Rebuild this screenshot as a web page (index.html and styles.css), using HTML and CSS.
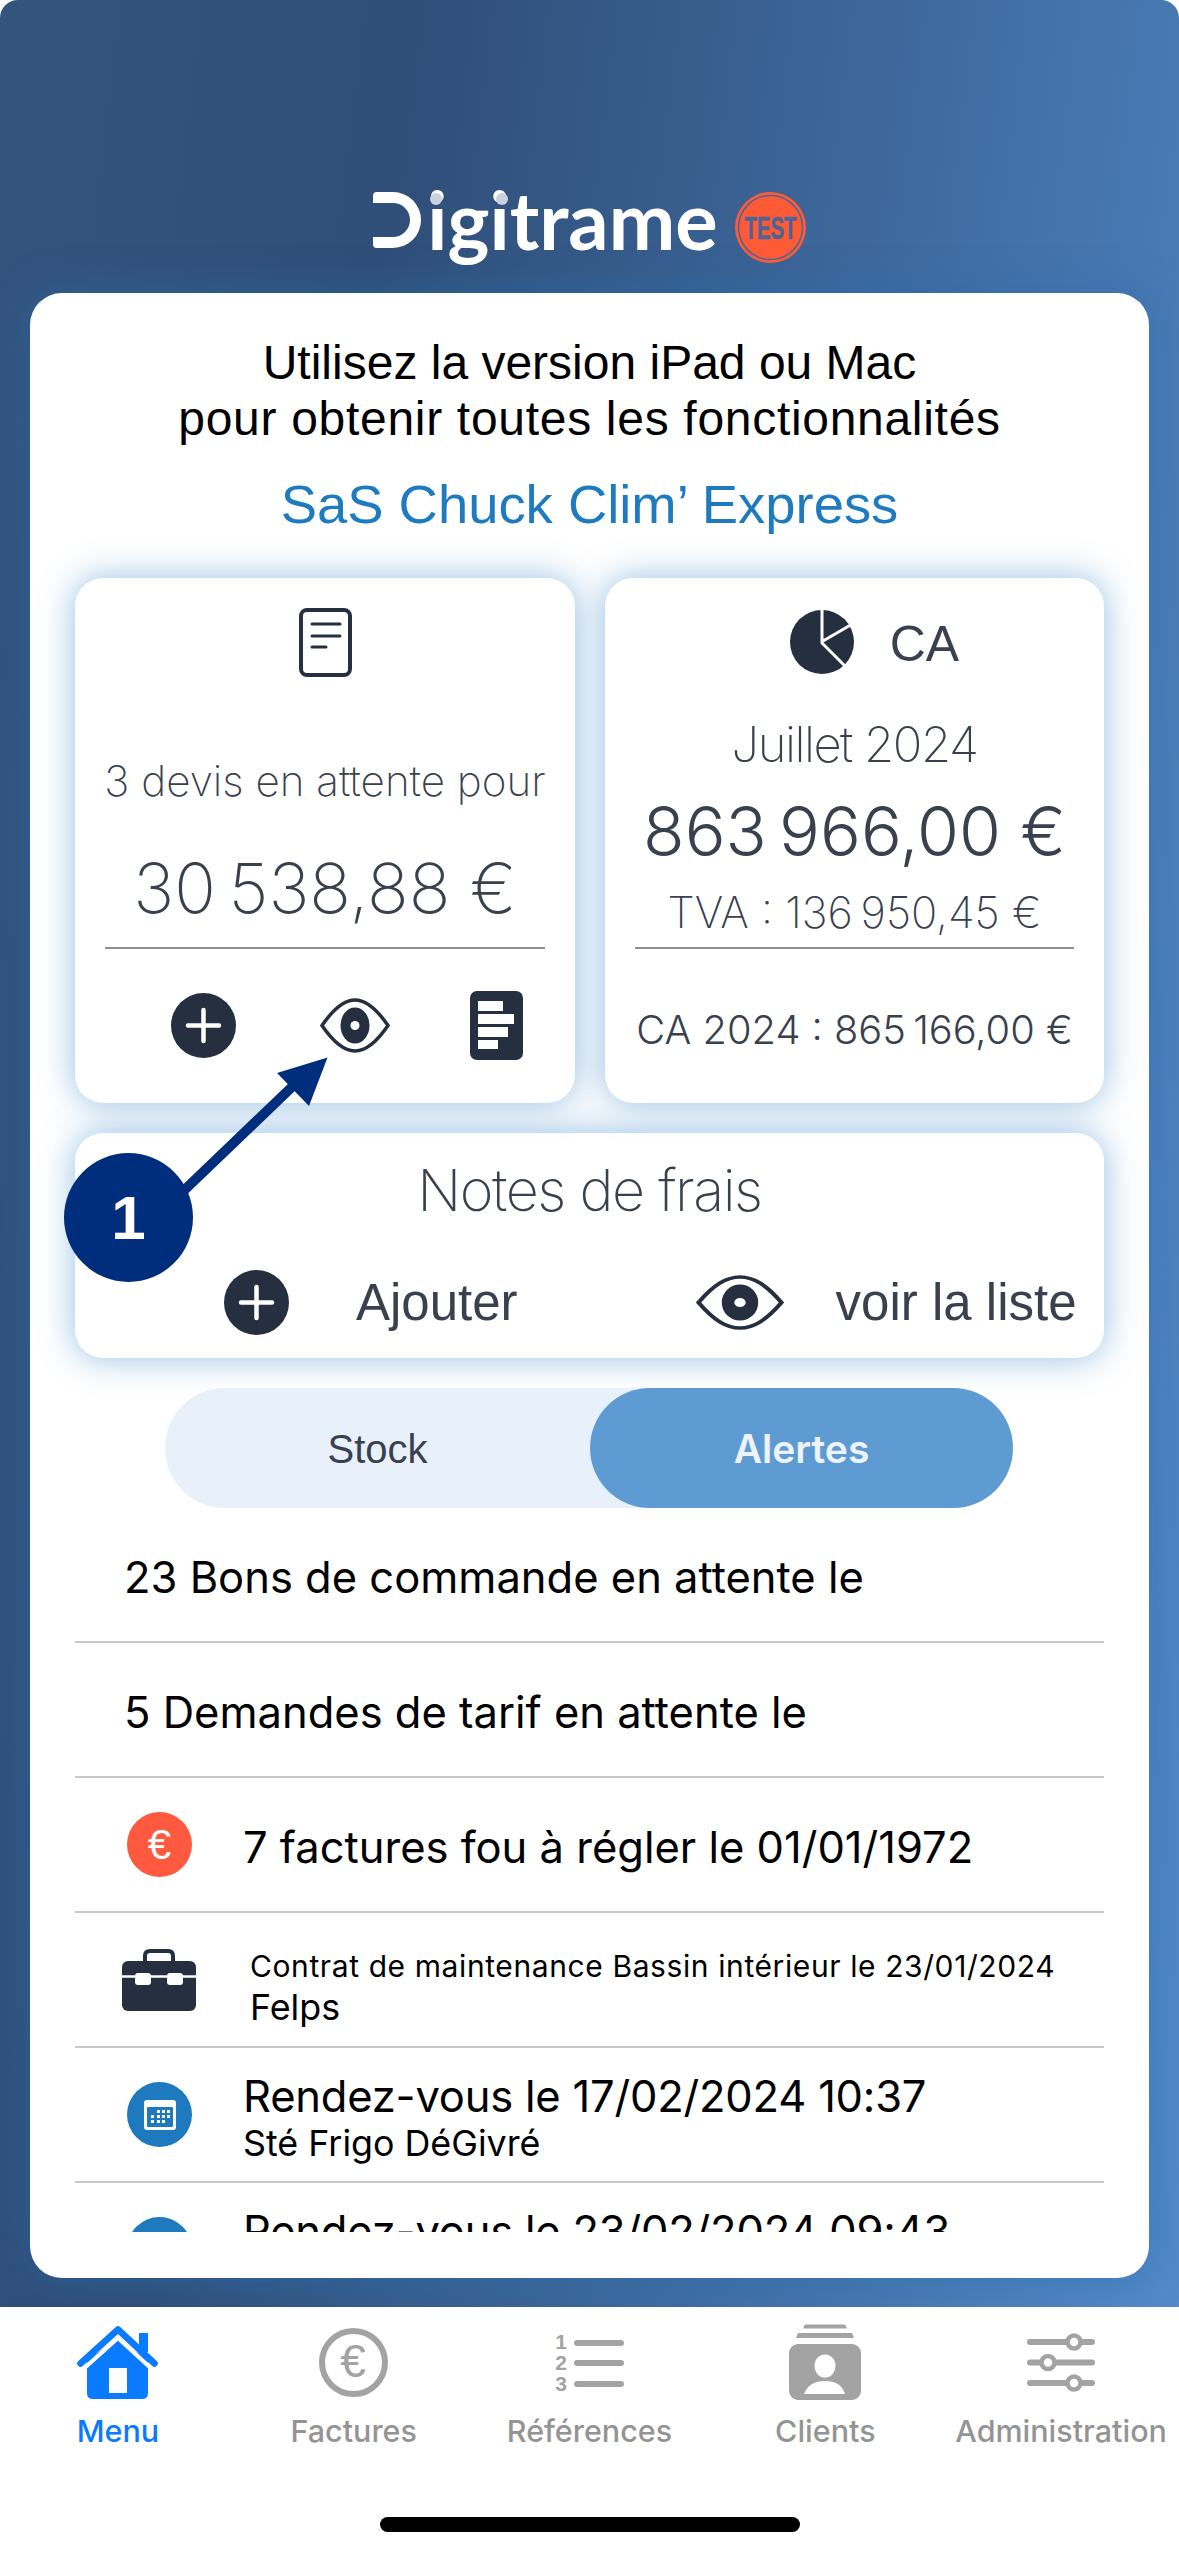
FILE: index.html
```html
<!DOCTYPE html>
<html lang="fr">
<head>
    <meta charset="UTF-8">
    <title>Digitrame</title>
    <link rel="stylesheet" href="styles.css">
</head>
<body>

<div class="screen">
    <div class="top">
        <header class="logo-bar">
            <span class="logo-d"></span>
            <span class="logo-word">igitrame<i class="logo-dot dot-one"></i><i class="logo-dot dot-two"></i></span>
            <svg class="test-badge" viewBox="0 0 71 71">
                <circle cx="35.5" cy="35.5" r="35.5" fill="#ff5a36"/>
                <circle cx="35.5" cy="35.5" r="32" fill="none" stroke="#4b6596" stroke-width="1.5"/>
                <text x="35.5" y="47" text-anchor="middle" textLength="52" lengthAdjust="spacingAndGlyphs" class="test-text">TEST</text>
            </svg>
        </header>

        <main class="panel">
            <p class="intro">Utilisez la version iPad ou Mac<br><span class="intro-long">pour obtenir toutes les fonctionnalités</span></p>
            <h1 class="company">SaS Chuck Clim’ Express</h1>

            <div class="cards">
                <section class="card">
                    <svg class="doc-icon" viewBox="0 0 53 69" fill="none" stroke="#252f3f">
                        <rect x="2" y="2" width="49" height="65" rx="6" stroke-width="4"/>
                        <path d="M13 16H41M13 28H41M13 39H27" stroke-width="3" stroke-linecap="round"/>
                    </svg>
                    <p class="devis-label">3 devis en attente pour</p>
                    <p class="devis-amount">30&#8239;538,88 €</p>
                    <div class="card-line"></div>
                    <div class="card-actions">
                        <svg class="plus-icon" viewBox="0 0 65 65"><circle cx="32.5" cy="32.5" r="32.5" fill="#252f3f"/><path d="M17 32.5H48M32.5 17V48" stroke="#fff" stroke-width="4.5" stroke-linecap="round"/></svg>
                        <svg class="eye-icon" viewBox="0 0 70 55"><path d="M2 27.5C14 10 24 2 35 2S56 10 68 27.5C56 45 46 53 35 53S14 45 2 27.5Z" fill="none" stroke="#252f3f" stroke-width="3.5"/><ellipse cx="35" cy="27.5" rx="14.5" ry="18" fill="#252f3f"/><circle cx="35" cy="27.5" r="4.5" fill="#fff"/></svg>
                        <svg class="report-icon" viewBox="0 0 53 69"><rect width="53" height="69" rx="7" fill="#252f3f"/><path d="M8 10H33V20H8ZM8 23H44V33H8ZM8 36H38V46H8ZM8 49H28V58H8Z" fill="#fff"/></svg>
                    </div>
                </section>

                <section class="card">
                    <div class="ca-head">
                        <svg class="pie-icon" viewBox="0 0 64 64"><circle cx="32" cy="32" r="32" fill="#252f3f"/><path d="M32 -1V33L57 58M33 31L64 13" fill="none" stroke="#fff" stroke-width="3"/></svg>
                        <span class="ca-label">CA</span>
                    </div>
                    <p class="ca-month">Juillet 2024</p>
                    <p class="ca-amount">863&#8239;966,00 €</p>
                    <p class="ca-tva">TVA : 136&#8239;950,45 €</p>
                    <div class="card-line"></div>
                    <p class="ca-year">CA 2024 : 865&#8239;166,00 €</p>
                </section>
            </div>

            <section class="notes">
                <h2 class="notes-title">Notes de frais</h2>
                <div class="notes-actions">
                    <svg class="plus-icon" viewBox="0 0 65 65"><circle cx="32.5" cy="32.5" r="32.5" fill="#252f3f"/><path d="M17 32.5H48M32.5 17V48" stroke="#fff" stroke-width="4.5" stroke-linecap="round"/></svg>
                    <span class="notes-add">Ajouter</span>
                    <svg class="eye-wide" viewBox="0 0 70 55" preserveAspectRatio="none"><path d="M2 27.5C14 10 24 2 35 2S56 10 68 27.5C56 45 46 53 35 53S14 45 2 27.5Z" fill="none" stroke="#252f3f" stroke-width="3.5"/><ellipse cx="35" cy="27.5" rx="14.5" ry="18" fill="#252f3f"/><circle cx="35" cy="27.5" r="4.5" fill="#fff"/></svg>
                    <span class="notes-list">voir la liste</span>
                </div>
            </section>

            <div class="toggle">
                <span class="toggle-off">Stock</span>
                <span class="toggle-on">Alertes</span>
            </div>

            <div class="list">
                <div class="row row-plain">23 Bons de commande en attente le</div>
                <div class="row row-plain">5 Demandes de tarif en attente le</div>
                <div class="row row-round">
                    <span class="round-icon euro">€</span>
                    <span class="row-text">7 factures fou à régler le 01/01/1972</span>
                </div>
                <div class="row">
                    <svg class="case-icon" viewBox="0 0 74 62">
                        <path d="M23 13V7Q23 2 28 2H46Q51 2 51 7V13" fill="none" stroke="#252f3f" stroke-width="4"/>
                        <rect y="12" width="74" height="50" rx="6" fill="#252f3f"/>
                        <path d="M0 27.5H74" stroke="#fff" stroke-width="2.5"/>
                        <rect x="13" y="24" width="16" height="12" rx="3" fill="#fff"/>
                        <rect x="45" y="24" width="16" height="12" rx="3" fill="#fff"/>
                    </svg>
                    <div class="row-stack row-stack-small">
                        <span class="contract">Contrat de maintenance Bassin intérieur le 23/01/2024</span>
                        <span class="row-sub">Felps</span>
                    </div>
                </div>
                <div class="row row-round">
                    <span class="round-icon calendar">
                        <svg viewBox="0 0 34 32" class="cal-svg">
                            <rect x="1" y="1" width="32" height="30" rx="3" fill="#fff"/>
                            <rect x="4" y="8" width="26" height="20" rx="1" fill="#1e79bf"/>
                            <g fill="#fff">
                                <rect x="14" y="11" width="3" height="3"/><rect x="19" y="11" width="3" height="3"/><rect x="24" y="11" width="3" height="3"/>
                                <rect x="8" y="16" width="3" height="3"/><rect x="14" y="16" width="3" height="3"/><rect x="19" y="16" width="3" height="3"/><rect x="24" y="16" width="3" height="3"/>
                                <rect x="8" y="21" width="3" height="3"/><rect x="14" y="21" width="3" height="3"/><rect x="19" y="21" width="3" height="3"/>
                            </g>
                        </svg>
                    </span>
                    <div class="row-stack row-stack-date">
                        <span class="row-main">Rendez-vous le 17/02/2024 10:37</span>
                        <span class="row-sub">Sté Frigo DéGivré</span>
                    </div>
                </div>
                <div class="row row-round">
                    <span class="round-icon calendar"></span>
                    <div class="row-stack row-stack-date">
                        <span class="row-main">Rendez-vous le 23/02/2024 09:43</span>
                        <span class="row-sub">&nbsp;</span>
                    </div>
                </div>
            </div>
        </main>
    </div>

    <nav class="tabs">
        <div class="tab-grid">
            <div class="tab tab-active">
                <span class="tab-icon">
                    <svg class="home-icon" viewBox="0 0 81 73">
                        <path d="M62 7H71V26H62Z" fill="#0a7aff"/>
                        <path d="M10 34L41 13L71 34V67Q71 73 65 73H16Q10 73 10 67Z" fill="#0a7aff"/>
                        <path d="M3 46L41 12L78 46" fill="none" stroke="#fff" stroke-width="4"/>
                        <path d="M3.500 37.500L41 3.500L77.500 37.500" fill="none" stroke="#0a7aff" stroke-width="6.500" stroke-linecap="round" stroke-linejoin="round"/>
                        <rect x="32" y="42" width="18" height="25" fill="#fff"/>
                    </svg>
                </span>
                <span>Menu</span>
            </div>
            <div class="tab">
                <span class="tab-icon">
                    <svg class="coin-icon" viewBox="0 0 69 69">
                        <circle cx="34.500" cy="34.500" r="31.500" fill="none" stroke="#a3a3a3" stroke-width="6"/>
                        <text x="34" y="49" text-anchor="middle" class="coin-text">€</text>
                    </svg>
                </span>
                <span>Factures</span>
            </div>
            <div class="tab">
                <span class="tab-icon">
                    <svg class="refs-icon" viewBox="0 0 69 59">
                        <g class="refs-num"><text x="6" y="16" text-anchor="middle">1</text><text x="6" y="37" text-anchor="middle">2</text><text x="6" y="58" text-anchor="middle">3</text></g>
                        <path d="M22 10H66M22 30H66M22 51H66" stroke="#a3a3a3" stroke-width="6" stroke-linecap="round"/>
                    </svg>
                </span>
                <span>Références</span>
            </div>
            <div class="tab">
                <span class="tab-icon">
                    <svg class="clients-icon" viewBox="0 0 72 76">
                        <path d="M16 .5H56L58 4.500H14ZM9 9H63L65 14H7Z" fill="#a3a3a3"/>
                        <rect y="20" width="72" height="56" rx="9" fill="#a3a3a3"/>
                        <ellipse cx="36" cy="42" rx="10.500" ry="11.500" fill="#fff"/>
                        <path d="M15 70Q20 57 36 57T56 70Z" fill="#fff"/>
                    </svg>
                </span>
                <span>Clients</span>
            </div>
            <div class="tab">
                <span class="tab-icon">
                    <svg class="sliders-icon" viewBox="0 0 68 59">
                        <path d="M3 9H65M3 29.500H65M3 50H65" stroke="#a3a3a3" stroke-width="6" stroke-linecap="round"/>
                        <g fill="#fff" stroke="#a3a3a3" stroke-width="4.500"><circle cx="47" cy="9" r="6.500"/><circle cx="21" cy="29.500" r="6.500"/><circle cx="47" cy="50" r="6.500"/></g>
                    </svg>
                </span>
                <span>Administration</span>
            </div>
        </div>
        <div class="home-bar"></div>
    </nav>

    <div class="callout">
        <svg class="callout-arrow" viewBox="0 0 270 240">
            <path d="M110 150L230 35" stroke="#002e7c" stroke-width="10"/>
            <path d="M263.500 7.500L213 23L245 56Z" fill="#002e7c"/>
        </svg>
        <span class="callout-num">1</span>
    </div>
</div>

</body>
</html>
```

FILE: styles.css
```css
* { box-sizing: border-box; }
body {
    margin: 0;
    background: #fff;
    font-family: 'Liberation Sans', Arial, sans-serif;
}
p { margin: 0; }
h1, h2 { margin: 0; font-weight: normal; }
svg { display: block; flex: none; overflow: visible; }

.screen {
    position: relative;
    width: 1179px;
    height: 2556px;
    overflow: hidden;
    display: flex;
    flex-direction: column;
}
.top {
    height: 2307px;
    padding: 0 30px;
    border-radius: 18px 18px 0 0;
    background: linear-gradient(97deg, #34547e 0%, #2f4e78 28%, #3f6a9f 64%, #538ac9 100%);
}

/* logo */
.logo-bar {
    height: 293px;
    padding-top: 192px;
    display: flex;
    justify-content: center;
    align-items: flex-start;
}
.logo-d {
    width: 48px;
    height: 56px;
    margin-right: 6px;
    border: 11px solid #fff;
    border-left: none;
    border-radius: 4px 30px 30px 4px;
}
.logo-word {
    position: relative;
    margin-top: -17px;
    font-family: Lato, sans-serif;
    font-weight: 700;
    font-size: 79.500px;
    line-height: 90px;
    color: #fff;
}
.logo-dot {
    position: absolute;
    width: 12px;
    height: 12px;
    top: 18px;
    border-radius: 50%;
    background: #c9d2de;
}
.dot-one { left: 3px; }
.dot-two { left: 69px; }
.test-badge { width: 71px; height: 71px; margin-left: 17px; }
.test-text {
    font-family: 'Liberation Sans', sans-serif;
    font-weight: 700;
    font-size: 31px;
    fill: #4b6596;
    stroke: #4b6596;
    stroke-width: 0.6px;
}

/* white panel */
.panel {
    height: 1985px;
    padding: 42px 45px 0;
    border-radius: 32px;
    background: #fff;
    box-shadow: 0 0 40px rgba(40, 110, 175, 0.55);
}
.intro {
    font-size: 48px;
    line-height: 56px;
    text-align: center;
    color: #000;
    white-space: nowrap;
}
.intro-long { letter-spacing: 0.7px; }
.company {
    margin-top: 28px;
    margin-bottom: 43px;
    font-size: 54.400px;
    line-height: 60px;
    text-align: center;
    color: #1f7bc0;
}

/* cards */
.cards {
    display: grid;
    grid-template-columns: 500px 499px;
    gap: 30px;
}
.card, .notes {
    background: #fff;
    border-radius: 28px;
    box-shadow: 0 0 34px rgba(70, 145, 205, 0.58);
    color: #39414f;
    font-family: Inter, sans-serif;
    font-weight: 200;
    white-space: nowrap;
}
.card {
    height: 525px;
    padding: 30px 30px 0;
    display: flex;
    flex-direction: column;
    align-items: center;
}
.card-line {
    align-self: stretch;
    flex: none;
    height: 2px;
    background: #8e8e93;
}
.doc-icon { width: 53px; height: 69px; }
.devis-label {
    margin-top: 76px;
    font-size: 42.200px;
    line-height: 56px;
}
.devis-amount {
    margin-top: 37px;
    margin-bottom: 17px;
    font-size: 69px;
    line-height: 84px;
    letter-spacing: -2px;
}
.card-actions {
    align-self: stretch;
    margin-top: 42px;
    padding-left: 66px;
    display: flex;
    align-items: center;
}
.plus-icon { width: 65px; height: 65px; }
.eye-icon { width: 70px; height: 55px; margin-left: 84px; }
.report-icon { width: 53px; height: 69px; margin-left: 80px; }

.ca-head {
    display: flex;
    align-items: center;
    gap: 36px;
    height: 64px;
    margin-top: 2px;
    padding-left: 40px;
}
.ca-label {
    padding-top: 4px;
    font-family: 'Liberation Sans', sans-serif;
    font-size: 50px;
    font-weight: 400;
}
.pie-icon { width: 64px; height: 64px; }
.ca-month {
    margin-top: 41px;
    font-size: 49px;
    line-height: 60px;
    letter-spacing: -1.5px;
}
.ca-amount {
    margin-top: 14px;
    font-weight: 300;
    font-size: 68px;
    line-height: 84px;
    letter-spacing: -2.200px;
}
.ca-tva {
    margin-top: 12px;
    margin-bottom: 8px;
    font-size: 43.400px;
    line-height: 54px;
}
.ca-year {
    margin-top: 55px;
    font-weight: 300;
    font-size: 39.800px;
    line-height: 52px;
}

.notes {
    height: 225px;
    margin-top: 30px;
    padding-top: 24px;
}
.notes-title {
    font-weight: 200;
    font-size: 57.500px;
    line-height: 66px;
    letter-spacing: -1.500px;
    text-align: center;
}
.notes-actions {
    margin-top: 47px;
    padding-left: 149px;
    display: flex;
    align-items: center;
    font-family: 'Liberation Sans', sans-serif;
    font-weight: 400;
    font-size: 51px;
}
.notes-add { margin-left: 67px; }
.eye-wide { width: 88px; height: 55px; margin-left: 178px; }
.notes-list { margin-left: 52px; }

/* toggle */
.toggle {
    width: 848px;
    height: 120px;
    margin: 30px 0 0 90px;
    border-radius: 60px;
    background: #e8f0fa;
    display: grid;
    grid-template-columns: 425px 423px;
    grid-template-rows: 120px;
    font-size: 40px;
    line-height: 122px;
    text-align: center;
}
.toggle-off { color: #39414f; }
.toggle-on {
    border-radius: 60px;
    background: #5f9bd3;
    color: #eef3fb;
    font-family: Inter, sans-serif;
    font-weight: 600;
    font-size: 39px;
}

/* list */
.list {
    height: 724px;
    overflow: hidden;
    font-family: Inter, sans-serif;
    color: #000;
}
.row {
    height: 135px;
    padding-left: 47px;
    border-bottom: 2px solid #c8c8cc;
    display: flex;
    align-items: center;
    font-size: 43.500px;
}
.row-plain { padding: 4px 0 0 49px; }
.row-round { padding-left: 52px; }
.round-icon {
    flex: none;
    width: 65px;
    height: 65px;
    border-radius: 50%;
    display: flex;
    align-items: center;
    justify-content: center;
}
.euro {
    background: #ff5a40;
    color: #fff;
    font-family: 'Liberation Sans', sans-serif;
    font-size: 42px;
}
.calendar { background: #1e79bf; }
.cal-svg { width: 34px; height: 32px; }
.row-text { margin-left: 51px; padding-top: 4px; }
.case-icon { width: 74px; height: 62px; }
.row-stack {
    margin-left: 51px;
    display: flex;
    flex-direction: column;
}
.row-stack-small { margin-left: 54px; padding-top: 14px; }
.row-stack-date { padding-top: 4px; }
.contract { font-size: 30px; line-height: 40px; letter-spacing: 0.6px; }
.row-main { line-height: 52px; letter-spacing: -0.2px; }
.row-sub { font-size: 35.800px; line-height: 42px; }

/* tab bar */
.tabs {
    height: 249px;
    background: #fff;
    padding-top: 15px;
}
.tab-grid {
    display: grid;
    grid-template-columns: repeat(5, 1fr);
}
.tab {
    display: flex;
    flex-direction: column;
    align-items: center;
    font-family: Inter, sans-serif;
    font-weight: 500;
    font-size: 30.500px;
    line-height: 38px;
    color: #949494;
    white-space: nowrap;
}
.tab-active { color: #0a7aff; }
.tab-icon {
    height: 80px;
    margin-bottom: 10px;
    display: flex;
    align-items: center;
}
.home-icon { width: 81px; height: 73px; }
.coin-icon { width: 69px; height: 69px; }
.coin-text { font-family: 'Liberation Sans', sans-serif; font-size: 46px; fill: #a3a3a3; }
.refs-icon { width: 69px; height: 59px; }
.refs-num text { font-family: 'Liberation Sans', sans-serif; font-weight: 700; font-size: 21px; fill: #a3a3a3; }
.clients-icon { width: 72px; height: 76px; }
.sliders-icon { width: 68px; height: 59px; }
.home-bar {
    width: 420px;
    height: 15px;
    margin: 67px auto 0;
    border-radius: 8px;
    background: #000;
}

/* numbered callout drawn over the page */
.callout {
    position: absolute;
    left: 64px;
    top: 1050px;
    width: 270px;
    height: 240px;
}
.callout-arrow { width: 270px; height: 240px; }
.callout-num {
    position: absolute;
    left: 0;
    top: 103px;
    width: 129px;
    height: 129px;
    border-radius: 50%;
    background: #002e7c;
    color: #fff;
    font-weight: 700;
    font-size: 62px;
    line-height: 129px;
    text-align: center;
}
```
